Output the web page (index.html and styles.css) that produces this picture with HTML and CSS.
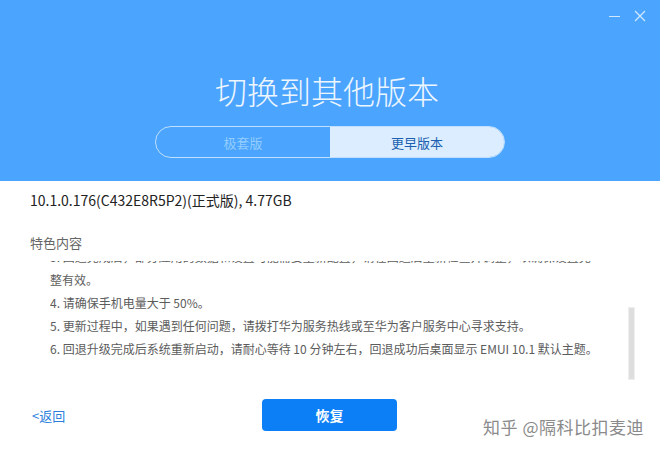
FILE: index.html
```html
<!DOCTYPE html>
<html lang="zh-CN">
<head>
  <meta charset="UTF-8" />
  <meta name="viewport" content="width=device-width, initial-scale=1.0"/>
  <title>切换到其他版本</title>
  <link rel="stylesheet" href="styles.css">
</head>
<body>

  <div class="dialog">
    <div class="header">
      <div class="window-buttons">
        <span class="win-btn minimize"></span>
        <span class="win-btn close">
          <svg width="12" height="12" viewBox="0 0 12 12"><path d="M1 1 L11 11 M11 1 L1 11" stroke="#cfe7ff" stroke-width="1.3" fill="none"/></svg>
        </span>
      </div>
      <h1 class="title">切换到其他版本</h1>
      <div class="tabs">
        <div class="tab">极套版</div>
        <div class="tab active">更早版本</div>
      </div>
    </div>

    <div class="content">
      <p class="version">10.1.0.176(C432E8R5P2)(正式版), 4.77GB</p>
      <p class="section-title">特色内容</p>

      <div class="notes">
        <ul class="notes-list">
          <li>3. 回退完成后，部分应用的数据和设置可能需要重新配置，请在回退后重新检查并调整，以确保设置完</li>
          <li class="cont">整有效。</li>
          <li>4. 请确保手机电量大于 50%。</li>
          <li>5. 更新过程中，如果遇到任何问题，请拨打华为服务热线或至华为客户服务中心寻求支持。</li>
          <li>6. 回退升级完成后系统重新启动，请耐心等待 10 分钟左右，回退成功后桌面显示 EMUI 10.1 默认主题。</li>
        </ul>
        <div class="scrollbar"><div class="thumb"></div></div>
      </div>
    </div>

    <div class="footer">
      <a href="#" class="back-link">&lt;返回</a>
      <button class="restore-btn">恢复</button>
    </div>

    <div class="watermark">知乎 @隔科比扣麦迪</div>
  </div>

</body>
</html>
```

FILE: styles.css
```css
* {
  box-sizing: border-box;
  margin: 0;
  padding: 0;
}

body {
  font-family: "Noto Sans CJK SC", "Noto Sans", sans-serif;
  background-color: #ffffff;
  color: #222;
}

.dialog {
  position: relative;
  width: 660px;
  height: 455px;
  overflow: hidden;
}

.header {
  height: 181px;
  background-color: #4ba4fd;
  padding-top: 66px;
  position: relative;
}

.window-buttons {
  position: absolute;
  top: 10px;
  right: 14px;
  display: flex;
  align-items: center;
  gap: 14px;
}

.win-btn {
  display: block;
}

.minimize {
  width: 11px;
  height: 1px;
  background-color: #cfe7ff;
  margin-top: 1px;
}

.close svg {
  display: block;
}

.title {
  text-align: center;
  font-size: 32px;
  font-weight: 300;
  color: #edf6ff;
  line-height: 48px;
  padding-right: 6px;
}

.tabs {
  display: flex;
  width: 350px;
  height: 32px;
  margin: 12px 0 0 155px;
  border: 1px solid #bfe0ff;
  border-radius: 16px;
  overflow: hidden;
}

.tab {
  flex: 1;
  display: flex;
  align-items: center;
  justify-content: center;
  font-size: 13px;
  color: #93cdff;
}

.tab.active {
  background-color: #dcedff;
  color: #1a5fb0;
}

.content {
  padding: 8px 0 0 30px;
}

.version {
  font-size: 14px;
  line-height: 22px;
  color: #222;
}

.section-title {
  margin-top: 23px;
  font-size: 13px;
  line-height: 18px;
  color: #666;
}

.notes {
  display: flex;
  height: 123px;
  margin-top: 9px;
  overflow: hidden;
}

.notes-list {
  flex: 1;
  list-style: none;
  padding-left: 20px;
  margin-top: -16px;
  font-size: 12px;
  line-height: 23px;
  color: #5c5c5c;
}

.notes-list li {
  white-space: nowrap;
  overflow: hidden;
}

.scrollbar {
  width: 8px;
  margin-right: 24px;
  padding-top: 46px;
}

.thumb {
  width: 7px;
  height: 73px;
  background-color: #dedede;
  border: 1px solid #eeeeee;
}

.footer {
  display: flex;
  align-items: center;
  padding: 15px 0 0 32px;
}

.back-link {
  font-size: 13px;
  color: #2c7fdc;
  text-decoration: none;
  width: 230px;
}

.restore-btn {
  width: 135px;
  height: 32px;
  border: none;
  border-radius: 4px;
  background-color: #0d7ff6;
  color: #fff;
  font-family: inherit;
  font-size: 14px;
  font-weight: 700;
}

.watermark {
  position: absolute;
  right: 16px;
  bottom: 16px;
  font-size: 17px;
  color: #8a8a8a;
  letter-spacing: 0.5px;
  text-shadow: 0 0 2px #fff;
}
```
